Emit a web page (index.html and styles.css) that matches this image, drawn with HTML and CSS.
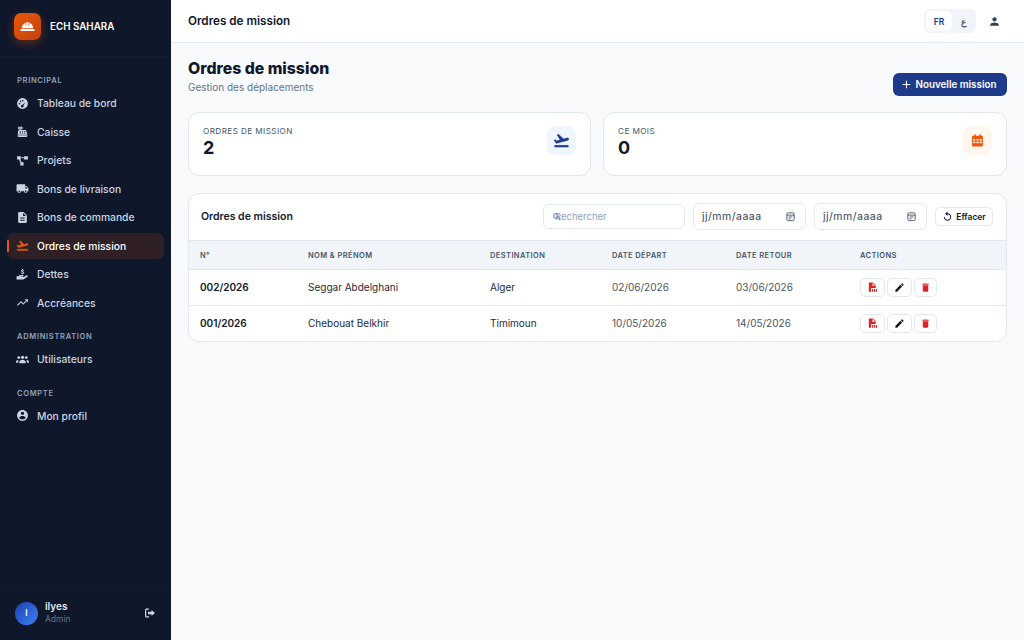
FILE: index.html
```html
<!DOCTYPE html>
<html lang="fr">
<head>
    <meta charset="UTF-8">
    <meta name="viewport" content="width=device-width, initial-scale=1.0">
    <title>Ordres de mission</title>
    <link rel="stylesheet" href="styles.css">
</head>
<body>
    <aside class="sidebar">
        <div class="brand">
            <div class="brand-logo">
                <svg viewBox="0 0 24 24" width="17" height="17" fill="#fff"><path d="M4 14.500C4 10.500 6.200 7.600 9.500 6.600V11h1V5.600h3V11h1V6.600c3.300 1 5.500 3.900 5.500 7.900z"/><rect x="2" y="15.500" width="20" height="3" rx="1"/></svg>
            </div>
            <span class="brand-name">ECH SAHARA</span>
        </div>
        <nav class="nav">
            <div class="nav-label">Principal</div>
            <a class="nav-item">
                <svg viewBox="0 0 24 24" class="nav-icon"><path fill-rule="evenodd" d="M12 2a10 10 0 1 0 0 20 10 10 0 0 0 0-20zM6.500 11a1.500 1.500 0 1 1 0 3 1.500 1.500 0 0 1 0-3zm2-4.500a1.500 1.500 0 1 1 0 3 1.500 1.500 0 0 1 0-3zm4-1a1.500 1.500 0 1 1 0 3 1.500 1.500 0 0 1 0-3zm5 4.500l-3.900 5.100a2.500 2.500 0 1 1-2-.9z"/></svg>
                Tableau de bord
            </a>
            <a class="nav-item">
                <svg viewBox="0 0 24 24" class="nav-icon"><path fill-rule="evenodd" d="M4 3h8v5H9v1h8c1 0 1.700.6 2 1.500L21 18H3l1-7.500C4.200 9.600 5 9 6 9h1V8H4zm2 2v1h4V5zM7 11v1.500h2V11zm4 0v1.500h2V11zm4 0v1.500h2V11zM7 14v1.500h2V14zm4 0v1.500h2V14zm4 0v1.500h2V14zM3 19h18v1.500c0 .8-.7 1.500-1.500 1.500h-15C3.700 22 3 21.300 3 20.500z"/></svg>
                Caisse
            </a>
            <a class="nav-item">
                <svg viewBox="0 0 24 24" class="nav-icon"><path d="M2 4h7v6H7.600l3 5H14v6H8v-5.300L5.500 10H2zm13 0h7v6h-7V8h-5V6h5z"/></svg>
                Projets
            </a>
            <a class="nav-item">
                <svg viewBox="0 0 24 24" class="nav-icon"><path d="M20 8h-3V4H3c-1.100 0-2 .9-2 2v11h2c0 1.660 1.340 3 3 3s3-1.340 3-3h6c0 1.660 1.340 3 3 3s3-1.340 3-3h2v-5l-3-4zM6 18.500c-.83 0-1.500-.67-1.500-1.500s.67-1.500 1.500-1.500 1.500.67 1.500 1.500-.67 1.500-1.500 1.500zm13.500-9l1.960 2.500H17V9.500h2.500zm-1.500 9c-.83 0-1.500-.67-1.500-1.500s.67-1.500 1.500-1.500 1.500.67 1.500 1.500-.67 1.500-1.500 1.500z"/></svg>
                Bons de livraison
            </a>
            <a class="nav-item">
                <svg viewBox="0 0 24 24" class="nav-icon"><path d="M14 2H6c-1.100 0-1.990.9-1.990 2L4 20c0 1.100.89 2 1.990 2H18c1.100 0 2-.9 2-2V8l-6-6zm2 16H8v-2h8v2zm0-4H8v-2h8v2zm-3-5V3.500L18.500 9H13z"/></svg>
                Bons de commande
            </a>
            <a class="nav-item nav-item-active">
                <svg viewBox="0 0 24 24" class="nav-icon plane-icon"><path d="M2.500 19h19v2h-19zm19.570-9.360c-.21-.8-1.040-1.280-1.840-1.060L14.920 10l-6.900-6.430-1.930.51 4.140 7.170-4.970 1.330-1.970-1.540-1.450.39 1.820 3.160.77 1.330 1.600-.43 5.310-1.420 4.350-1.160L21 11.490c.81-.23 1.280-1.050 1.070-1.850z"/></svg>
                Ordres de mission
            </a>
            <a class="nav-item">
                <svg viewBox="0 0 24 24" class="nav-icon"><path d="M11 2h2v1.100c1 .2 1.700.7 2 1.400l-1.400.7c-.2-.4-.7-.7-1.500-.7-.8 0-1.300.3-1.300.7 0 .5.500.6 1.500.9 1.500.3 2.800.8 2.800 2.300 0 1-.8 1.700-2.100 2V11.500h-2v-1.100c-1.100-.2-1.900-.8-2.200-1.600l1.500-.6c.2.500.8.900 1.700.9.800 0 1.300-.3 1.300-.7 0-.5-.6-.7-1.700-1C10.300 7.100 9.200 6.600 9.200 5.200c0-1 .7-1.800 1.800-2zM1 15h3.500c1.200-1.300 3-2 4.500-2h3.500c1 0 1.500.7 1.500 1.400 0 .8-.6 1.400-1.500 1.400H9.500v1h4.300l5.400-3c.9-.5 1.800-.3 2.300.3.500.7.300 1.600-.4 2.100l-6 4.300c-.5.300-1 .5-1.600.5H1z"/></svg>
                Dettes
            </a>
            <a class="nav-item">
                <svg viewBox="0 0 24 24" class="nav-icon"><path d="M16 6l2.290 2.290-4.880 4.880-4-4L2 16.590 3.410 18l6-6 4 4 6.300-6.290L22 12V6z"/></svg>
                Accréances
            </a>
            <div class="nav-label">Administration</div>
            <a class="nav-item">
                <svg viewBox="0 0 24 24" class="nav-icon"><circle cx="12" cy="8" r="3"/><circle cx="5" cy="8.500" r="2.500"/><circle cx="19" cy="8.500" r="2.500"/><path d="M6 19v-2c0-2.500 2.700-4.500 6-4.500s6 2 6 4.500v2zM0 18v-2c0-2 1.800-3.300 4.800-3.300-.5.800-.8 1.800-.8 3V18zm24 0v-2c0-2-1.800-3.300-4.800-3.300.5.800.8 1.800.8 3V18z"/></svg>
                Utilisateurs
            </a>
            <div class="nav-label">Compte</div>
            <a class="nav-item">
                <svg viewBox="0 0 24 24" class="nav-icon"><path d="M12 2C6.480 2 2 6.480 2 12s4.480 10 10 10 10-4.480 10-10S17.520 2 12 2zm0 3c1.660 0 3 1.340 3 3s-1.340 3-3 3-3-1.340-3-3 1.340-3 3-3zm0 14.200c-2.500 0-4.710-1.280-6-3.220.03-1.990 4-3.080 6-3.080 1.990 0 5.970 1.090 6 3.080-1.290 1.940-3.500 3.220-6 3.220z"/></svg>
                Mon profil
            </a>
        </nav>
        <div class="user-box">
            <div class="avatar">I</div>
            <div class="user-info">
                <div class="user-name">ilyes</div>
                <div class="user-role">Admin</div>
            </div>
            <svg viewBox="0 0 24 24" class="logout-icon"><path d="M10 3H5C3.300 3 2 4.300 2 6v12c0 1.700 1.300 3 3 3h5v-2.500H5c-.3 0-.5-.2-.5-.5V6c0-.3.2-.5.500-.5h5zM15 6l7 6-7 6v-3.500H8v-5h7z"/></svg>
        </div>
    </aside>

    <div class="page">
        <header class="topbar">
            <div class="topbar-title">Ordres de mission</div>
            <div class="lang-switch">
                <span class="lang lang-active">FR</span>
                <span class="lang">ع</span>
            </div>
            <svg viewBox="0 0 24 24" class="topbar-user"><path d="M12 12c2.210 0 4-1.790 4-4s-1.790-4-4-4-4 1.790-4 4 1.790 4 4 4zm0 2c-2.670 0-8 1.340-8 4v2h16v-2c0-2.660-5.330-4-8-4z"/></svg>
        </header>

        <main class="content">
            <div class="page-head">
                <div class="page-heading">
                    <h1 class="page-title">Ordres de mission</h1>
                    <div class="page-sub">Gestion des déplacements</div>
                </div>
                <button class="primary-button">
                    <svg viewBox="0 0 24 24" width="13" height="13" fill="#fff"><path d="M19 13h-6v6h-2v-6H5v-2h6V5h2v6h6v2z"/></svg>
                    Nouvelle mission
                </button>
            </div>

            <div class="stats">
                <div class="stat-card">
                    <div>
                        <div class="stat-label">Ordres de mission</div>
                        <div class="stat-value">2</div>
                    </div>
                    <div class="stat-icon stat-icon-blue">
                        <svg viewBox="0 0 24 24" width="17" height="17" class="plane-icon" fill="#1e3a8a"><path d="M2.500 19h19v2h-19zm19.570-9.360c-.21-.8-1.040-1.280-1.840-1.060L14.920 10l-6.900-6.430-1.930.51 4.140 7.170-4.970 1.330-1.970-1.540-1.450.39 1.820 3.160.77 1.330 1.600-.43 5.310-1.420 4.350-1.160L21 11.490c.81-.23 1.280-1.050 1.070-1.850z"/></svg>
                    </div>
                </div>
                <div class="stat-card">
                    <div>
                        <div class="stat-label">Ce mois</div>
                        <div class="stat-value">0</div>
                    </div>
                    <div class="stat-icon stat-icon-orange">
                        <svg viewBox="0 0 24 24" width="13" height="13" fill="#ea580c"><path fill-rule="evenodd" d="M6 1h3v2h6V1h3v2h2c1.100 0 2 .9 2 2v16c0 1.100-.9 2-2 2H4c-1.100 0-2-.9-2-2V5c0-1.100.9-2 2-2h2zM4 9v3h4V9zm6 0v3h4V9zm6 0v3h4V9zM4 14v3h4v-3zm6 0v3h4v-3zm6 0v3h4v-3z"/></svg>
                    </div>
                </div>
            </div>

            <section class="table-card">
                <div class="table-toolbar">
                    <div class="table-title">Ordres de mission</div>
                    <div class="search-box">
                        <svg viewBox="0 0 24 24" class="search-icon"><path d="M15.500 14h-.79l-.28-.27A6.470 6.470 0 0 0 16 9.500 6.500 6.500 0 1 0 9.500 16c1.610 0 3.090-.59 4.230-1.570l.27.28v.79l5 4.990L20.490 19l-4.990-5zm-6 0C7.010 14 5 11.990 5 9.500S7.010 5 9.500 5 14 7.010 14 9.500 11.990 14 9.500 14z"/></svg>
                        <span class="search-text">Rechercher</span>
                    </div>
                    <div class="date-box">
                        <span>jj/mm/aaaa</span>
                        <svg viewBox="0 0 24 24" class="date-icon"><rect x="4" y="4" width="16" height="17" rx="3"/><path d="M4 9h16M8 13h8M8 17h4"/></svg>
                    </div>
                    <div class="date-box">
                        <span>jj/mm/aaaa</span>
                        <svg viewBox="0 0 24 24" class="date-icon"><rect x="4" y="4" width="16" height="17" rx="3"/><path d="M4 9h16M8 13h8M8 17h4"/></svg>
                    </div>
                    <button class="clear-button">
                        <svg viewBox="0 0 24 24" width="11" height="11" fill="#0f172a"><path d="M12 5V1L7 6l5 5V7c3.310 0 6 2.690 6 6s-2.690 6-6 6-6-2.690-6-6H4c0 4.420 3.580 8 8 8s8-3.580 8-8-3.580-8-8-8z"/></svg>
                        Effacer
                    </button>
                </div>
                <table class="missions">
                    <colgroup>
                        <col class="col-num"><col class="col-name"><col class="col-dest"><col class="col-date"><col class="col-date"><col>
                    </colgroup>
                    <thead>
                        <tr>
                            <th>N°</th>
                            <th>Nom &amp; Prénom</th>
                            <th>Destination</th>
                            <th>Date départ</th>
                            <th>Date retour</th>
                            <th>Actions</th>
                        </tr>
                    </thead>
                    <tbody>
                        <tr>
                            <td class="cell-num">002/2026</td>
                            <td>Seggar Abdelghani</td>
                            <td>Alger</td>
                            <td class="cell-date">02/06/2026</td>
                            <td class="cell-date">03/06/2026</td>
                            <td>
                                <div class="actions">
                                    <button class="act-button"><svg viewBox="0 0 24 24" class="act-icon act-red"><path d="M4 1h9l6 6v6H9v8H4zM12 2v6h6zM11 15h2.500v6H11zM15 15h2.500v6H15zM19 15h3v6h-3z"/></svg></button>
                                    <button class="act-button"><svg viewBox="0 0 24 24" class="act-icon act-dark"><path d="M3 17.250V21h3.750L17.810 9.940l-3.750-3.750L3 17.250zM20.710 7.040c.39-.39.39-1.020 0-1.410l-2.340-2.340c-.39-.39-1.020-.39-1.410 0l-1.830 1.830 3.750 3.750 1.830-1.830z"/></svg></button>
                                    <button class="act-button act-narrow"><svg viewBox="0 0 24 24" class="act-icon act-red"><path d="M6 19c0 1.100.9 2 2 2h8c1.100 0 2-.9 2-2V7H6v12zM19 4h-3.500l-1-1h-5l-1 1H5v2h14V4z"/></svg></button>
                                </div>
                            </td>
                        </tr>
                        <tr>
                            <td class="cell-num">001/2026</td>
                            <td>Chebouat Belkhir</td>
                            <td>Timimoun</td>
                            <td class="cell-date">10/05/2026</td>
                            <td class="cell-date">14/05/2026</td>
                            <td>
                                <div class="actions">
                                    <button class="act-button"><svg viewBox="0 0 24 24" class="act-icon act-red"><path d="M4 1h9l6 6v6H9v8H4zM12 2v6h6zM11 15h2.500v6H11zM15 15h2.500v6H15zM19 15h3v6h-3z"/></svg></button>
                                    <button class="act-button"><svg viewBox="0 0 24 24" class="act-icon act-dark"><path d="M3 17.250V21h3.750L17.810 9.940l-3.750-3.750L3 17.250zM20.710 7.040c.39-.39.39-1.020 0-1.410l-2.340-2.340c-.39-.39-1.020-.39-1.410 0l-1.830 1.830 3.750 3.750 1.830-1.830z"/></svg></button>
                                    <button class="act-button act-narrow"><svg viewBox="0 0 24 24" class="act-icon act-red"><path d="M6 19c0 1.100.9 2 2 2h8c1.100 0 2-.9 2-2V7H6v12zM19 4h-3.500l-1-1h-5l-1 1H5v2h14V4z"/></svg></button>
                                </div>
                            </td>
                        </tr>
                    </tbody>
                </table>
            </section>
        </main>
    </div>
</body>
</html>
```
FILE: styles.css
```css
* {
    box-sizing: border-box;
}
body {
    margin: 0;
    height: 640px;
    overflow: hidden;
    display: flex;
    background: #f8fafc;
    color: #0f172a;
    font-family: Inter, "Noto Sans", Arial, sans-serif;
}
.sidebar {
    width: 171px;
    flex-shrink: 0;
    display: flex;
    flex-direction: column;
    background: #0f172a;
}
.brand {
    height: 57px;
    display: flex;
    align-items: center;
    gap: 9px;
    padding: 0 14px 3px;
    border-bottom: 1px solid #131d31;
}
.brand-logo {
    width: 27px;
    height: 27px;
    border-radius: 7px;
    display: flex;
    align-items: center;
    justify-content: center;
    background: linear-gradient(135deg, #ea580c, #c2410c);
    box-shadow: 0 3px 10px rgba(234, 88, 12, 0.35);
}
.brand-name {
    color: #fff;
    font-size: 9.8px;
    font-weight: 600;
}
.nav {
    flex: 1;
    padding: 5px 7px 0;
}
.nav-label {
    height: 28px;
    padding: 14px 10px 0;
    color: #94a3b8;
    font-size: 7.5px;
    font-weight: 600;
    letter-spacing: 0.7px;
    text-transform: uppercase;
    line-height: 10px;
}
.nav-item {
    position: relative;
    height: 26.5px;
    margin-bottom: 2px;
    display: flex;
    align-items: center;
    gap: 8px;
    padding-left: 9px;
    border-radius: 7px;
    color: #cbd5e1;
    font-size: 10.3px;
    font-weight: 500;
}
.nav-icon {
    width: 13px;
    height: 13px;
    flex-shrink: 0;
    fill: #cbd5e1;
}
.nav-item-active {
    color: #fff;
    background: rgba(234, 88, 12, 0.15);
}
.nav-item-active .nav-icon {
    fill: #ea580c;
    stroke: #ea580c;
}
.plane-icon {
    stroke: #1e3a8a;
    stroke-width: 1;
}
.nav-item-active::before {
    content: '';
    position: absolute;
    left: 0;
    top: 7px;
    bottom: 7px;
    width: 2px;
    border-radius: 2px;
    background: #ea580c;
}
.user-box {
    height: 55px;
    display: flex;
    align-items: center;
    gap: 7px;
    padding: 0 15px;
    border-top: 1px solid #131d31;
}
.avatar {
    width: 23px;
    height: 23px;
    border-radius: 50%;
    display: flex;
    align-items: center;
    justify-content: center;
    background: linear-gradient(135deg, #1e40af, #3b82f6);
    color: #fff;
    font-size: 8.5px;
    font-weight: 600;
}
.user-info {
    flex: 1;
}
.user-name {
    color: #e2e8f0;
    font-size: 10px;
    font-weight: 600;
    line-height: 13px;
}
.user-role {
    color: #64748b;
    font-size: 8.5px;
    line-height: 13px;
}
.logout-icon {
    width: 12px;
    height: 12px;
    fill: #cbd5e1;
}
.page {
    flex: 1;
    min-width: 0;
    display: flex;
    flex-direction: column;
}
.topbar {
    height: 43px;
    display: flex;
    align-items: center;
    padding: 0 23px 0 17px;
    background: #fff;
    border-bottom: 1px solid #e2e8f0;
}
.topbar-title {
    flex: 1;
    font-size: 11.7px;
    font-weight: 600;
}
.lang-switch {
    width: 52px;
    height: 24px;
    display: flex;
    padding: 2px;
    margin-right: 12px;
    border-radius: 6px;
    background: #f1f5f9;
}
.lang {
    flex: 1;
    display: flex;
    align-items: center;
    justify-content: center;
    padding-top: 1px;
    border-radius: 5px;
    color: #475569;
    font-size: 8.5px;
    font-weight: 600;
}
.lang-active {
    flex: 0 0 26px;
    background: #fff;
    color: #1e3a8a;
}
.topbar-user {
    width: 13px;
    height: 13px;
    fill: #334155;
}
.content {
    padding: 15px 17px;
}
.page-head {
    display: flex;
    justify-content: space-between;
    align-items: flex-end;
    height: 38px;
    margin-bottom: 16px;
}
.page-heading {
    align-self: flex-start;
    padding-top: 1px;
}
.page-title {
    margin: 0;
    font-size: 15.8px;
    font-weight: 800;
    line-height: 20px;
}
.page-sub {
    margin-top: 1px;
    color: #64748b;
    font-size: 10px;
    line-height: 14px;
}
.primary-button {
    width: 114px;
    height: 23px;
    display: flex;
    align-items: center;
    justify-content: center;
    gap: 3px;
    padding-left: 2px;
    border: 0;
    border-radius: 6px;
    background: #1e3a8a;
    color: #fff;
    font-family: inherit;
    font-size: 9.8px;
    font-weight: 600;
    cursor: pointer;
}
.stats {
    display: grid;
    grid-template-columns: 403px 1fr;
    gap: 12px;
    margin-bottom: 17px;
}
.stat-card {
    height: 64px;
    display: flex;
    align-items: flex-start;
    justify-content: space-between;
    padding: 13px 14px 0;
    background: #fff;
    border: 1px solid #e2e8f0;
    border-radius: 11px;
}
.stat-label {
    color: #475569;
    font-size: 8.2px;
    letter-spacing: 0.4px;
    line-height: 11px;
    text-transform: uppercase;
}
.stat-value {
    font-size: 18px;
    font-weight: 700;
    line-height: 21px;
}
.stat-icon {
    width: 29px;
    height: 29px;
    display: flex;
    align-items: center;
    justify-content: center;
    border-radius: 8px;
}
.stat-icon-blue {
    background: #eff6ff;
}
.stat-icon-orange {
    background: #fff7ed;
}
.table-card {
    background: #fff;
    border: 1px solid #e2e8f0;
    border-radius: 11px;
    overflow: hidden;
}
.table-toolbar {
    height: 46px;
    display: flex;
    align-items: center;
    gap: 8px;
    padding: 0 13px 1px 12px;
}
.table-title {
    flex: 1;
    font-size: 10.5px;
    font-weight: 600;
}
.search-box {
    position: relative;
    width: 142px;
    height: 25px;
    display: flex;
    align-items: center;
    padding-left: 11px;
    border: 1px solid #e2e8f0;
    border-radius: 6px;
}
.search-icon {
    position: absolute;
    left: 8px;
    top: 7px;
    width: 10px;
    height: 10px;
    fill: #64748b;
}
.search-text {
    color: #94a3b8;
    font-size: 9.5px;
}
.date-box {
    width: 113px;
    height: 27px;
    display: flex;
    align-items: center;
    justify-content: space-between;
    padding: 0 9px 0 8px;
    border: 1px solid #e2e8f0;
    border-radius: 6px;
    color: #334155;
    font-size: 10.5px;
    letter-spacing: 0.5px;
}
.date-icon {
    width: 11px;
    height: 11px;
    fill: none;
    stroke: #475569;
    stroke-width: 2;
}
.clear-button {
    width: 58px;
    height: 19px;
    display: flex;
    align-items: center;
    justify-content: center;
    gap: 3px;
    padding: 0;
    background: #fff;
    border: 1px solid #e2e8f0;
    border-radius: 5px;
    color: #0f172a;
    font-family: inherit;
    font-size: 8.5px;
    font-weight: 600;
}
.missions {
    width: 100%;
    table-layout: fixed;
    border-collapse: collapse;
}
.col-num {
    width: 108px;
}
.col-name {
    width: 182px;
}
.col-dest {
    width: 122px;
}
.col-date {
    width: 124px;
}
.missions th {
    height: 29px;
    padding: 0 11px;
    text-align: left;
    background: #f1f5f9;
    border-top: 1px solid #e2e8f0;
    border-bottom: 1px solid #e2e8f0;
    color: #475569;
    font-size: 7.5px;
    font-weight: 600;
    letter-spacing: 0.4px;
    text-transform: uppercase;
}
.missions td {
    height: 35.5px;
    padding: 0 11px;
    border-bottom: 1px solid #e2e8f0;
    color: #1e293b;
    font-size: 10px;
}
.missions tr:last-child td {
    border-bottom: 0;
}
.missions td.cell-num {
    color: #0f172a;
    font-weight: 600;
}
.missions td.cell-date {
    color: #475569;
}
.actions {
    display: flex;
    gap: 2px;
}
.act-button {
    width: 25px;
    height: 19px;
    display: flex;
    align-items: center;
    justify-content: center;
    padding: 0;
    background: #fff;
    border: 1px solid #e2e8f0;
    border-radius: 5px;
}
.act-narrow {
    width: 23px;
}
.act-icon {
    width: 11px;
    height: 11px;
}
.act-red {
    fill: #dc2626;
}
.act-dark {
    fill: #0f172a;
}
```
